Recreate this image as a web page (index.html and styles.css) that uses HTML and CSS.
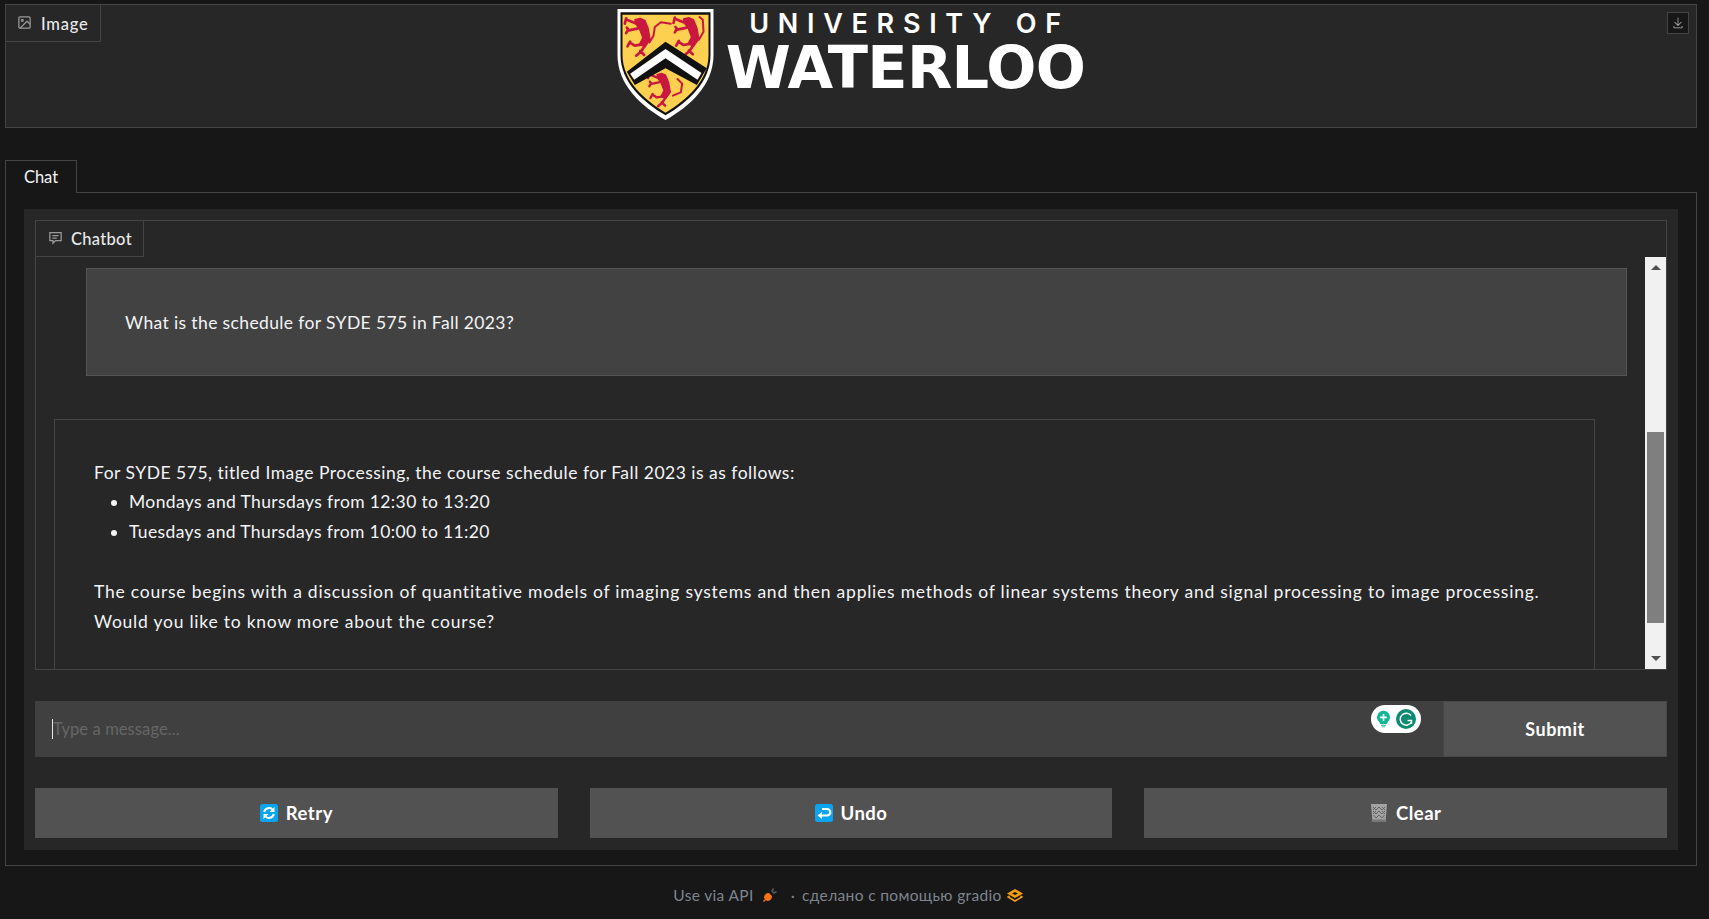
FILE: index.html
```html
<!DOCTYPE html>
<html lang="ru">
<head>
<meta charset="utf-8">
<title>University of Waterloo Chat</title>
<link rel="stylesheet" href="styles.css">
</head>
<body>
<svg class="defs" width="0" height="0">
  <defs>
    <g id="lion" fill="#c9173f" stroke="#c9173f" stroke-linecap="round" stroke-linejoin="round">
      <path stroke-width="4" d="M82 44 L98 40 L112 46 L122 70 L128 104 L112 126 L96 118 L106 98 L96 72 L86 58Z"/>
      <path fill="none" stroke-width="8" d="M88 56 L58 44 M56 40 L52 56 M92 70 L64 76 L58 68 M62 74 L56 84 M104 118 L82 122 L66 112 M68 110 L60 124 M112 122 L100 140 L86 152 M98 138 L110 150"/>
    </g>
  </defs>
</svg>
<div class="page">
  <section class="image-block">
    <div class="block-label label-image">
      <svg class="label-icon" viewBox="0 0 24 24" fill="none" stroke="currentColor" stroke-width="2"><rect x="3" y="3" width="18" height="18" rx="2"/><circle cx="8.500" cy="8.500" r="1.500"/><path d="M21 15l-5-5L5 21"/></svg>
      <span>Image</span>
    </div>
    <button class="download" aria-label="Download">
      <svg viewBox="0 0 32 32" fill="currentColor"><path d="M26 24v4H6v-4H4v4a2 2 0 0 0 2 2h20a2 2 0 0 0 2-2v-4zm0-10l-1.410-1.410L17 20.170V2h-2v18.170l-7.590-7.580L6 14l10 10l10-10z"/></svg>
    </button>
    <div class="logo">
      <svg class="shield" viewBox="24 12 288 333">
        <path fill="#fff" d="M24 12 H312 V150 C312 240 240 305 168 345 C96 305 24 240 24 150Z"/>
        <path fill="#111" d="M33 22 H303 V150 C303 232 234 292 168 331 C102 292 33 232 33 150Z"/>
        <path fill="#fdd04f" d="M39 29 H297 V150 C297 228 230 286 168 323 C106 286 39 228 39 150Z"/>
        <use href="#lion" x="-6" y="0"/>
        <use href="#lion" transform="translate(140 -2)"/>
        <use href="#lion" transform="translate(70 170) scale(.88)"/>
        <path fill="none" stroke="#c9173f" stroke-width="6" stroke-linecap="round" stroke-linejoin="round" d="M120 112 L132 92 L136 66 L154 52 L184 56M268 104 L282 80 L280 44 L270 36M190 272 L214 262 L218 236 L204 222"/>
        <path fill="#111" d="M168 110 L292 190 L262 240 L168 190 L76 240 L52 200Z"/>
        <path fill="#fff" d="M168 132 L276 204 L264 224 L168 160 L74 224 L62 206Z"/>
      </svg>
      <div class="wordmark">
        <span class="wm-top">UNIVERSITY OF</span>
        <span class="wm-main">WATERLOO</span>
      </div>
    </div>
  </section>

  <nav class="tabs"><span class="tab">Chat</span><span class="tab-rest"></span></nav>

  <main class="tab-panel">
    <div class="inner">
      <section class="chatbot">
        <div class="block-label label-chat">
          <svg class="label-icon" viewBox="0 0 24 24" fill="none" stroke="currentColor" stroke-width="2"><path d="M3 4h18v13h-9l-4 4v-4H3z"/><path d="M7 9h10M7 13h7"/></svg>
          <span>Chatbot</span>
        </div>
        <div class="chat-row">
          <div class="messages">
            <div class="msg user"><p>What is the schedule for SYDE 575 in Fall 2023?</p></div>
            <div class="msg bot">
              <p class="lead">For SYDE 575, titled Image Processing, the course schedule for Fall 2023 is as follows:</p>
              <ul>
                <li>Mondays and Thursdays from 12:30 to 13:20</li>
                <li>Tuesdays and Thursdays from 10:00 to 11:20</li>
              </ul>
              <p class="para">The course begins with a discussion of quantitative models of imaging systems and then applies methods of linear systems theory and signal processing to image processing. Would you like to know more about the course?</p>
            </div>
          </div>
          <div class="scrollbar">
            <span class="arrow up"></span>
            <div class="track"><span class="thumb"></span></div>
            <span class="arrow down"></span>
          </div>
        </div>
      </section>

      <div class="input-row">
        <div class="input">
          <span class="caret"></span><span class="placeholder">Type a message...</span>
          <div class="grammarly">
            <svg viewBox="0 0 18 20" width="15" height="18"><path fill="#11b795" d="M9 0a8 8 0 0 0-5 14c1 1 1 2 1 2h8s0-1 1-2A8 8 0 0 0 9 0z"/><path fill="#11b795" d="M6 17h6v1.200H6zM7 19h4v1H7z"/><path fill="#fff" d="M8 4h2v3h3v2h-3v3H8V9H5V7h3z"/></svg>
            <svg viewBox="0 0 20 20" width="20" height="20"><circle cx="10" cy="10" r="10" fill="#0a8a71"/><path fill="none" stroke="#fff" stroke-width="1.500" d="M15 6.500A6 6 0 1 0 15.500 13M11.500 11.500H15.500V15"/></svg>
          </div>
        </div>
        <button class="btn submit">Submit</button>
      </div>

      <div class="actions">
        <button class="btn action">
          <svg class="emoji" viewBox="0 0 18 18"><rect width="18" height="18" rx="2.500" fill="#0aa5ee"/><path fill="none" stroke="#fff" stroke-width="2" d="M4.200 8A5 5 0 0 1 13 6M13.800 10A5 5 0 0 1 5 12"/><path fill="#fff" d="M14.500 3v5h-5zM3.500 15v-5h5z"/></svg>
          Retry
        </button>
        <button class="btn action">
          <svg class="emoji" viewBox="0 0 18 18"><rect width="18" height="18" rx="2.500" fill="#0aa5ee"/><path fill="none" stroke="#fff" stroke-width="2.200" d="M7 5h5a3.200 3.200 0 0 1 0 6.500H5"/><path fill="#fff" d="M7 8v7L2.500 11.500z"/></svg>
          Undo
        </button>
        <button class="btn action">
          <svg class="emoji" viewBox="0 0 18 18"><path fill="#a3a3a3" d="M1 0h16l-1.500 18h-13z"/><path fill="none" stroke="#5c5c5c" stroke-width=".9" d="M3 3l3 3 3-3 3 3 3-3M3 7l3 3 3-3 3 3 3-3M3.500 11l2.500 3 3-3 3 3 2.500-3M6 3l-3 3M12 3l3 3M6 7l-3 3M12 7l3 3"/><path fill="#777" d="M2.500 15.500h13l-.3 2.500H2.800z"/></svg>
          Clear
        </button>
      </div>
    </div>
  </main>

  <footer class="footer">
    <span>Use via API</span>
    <svg class="foot-icon plug" viewBox="0 0 16 16"><path fill="#f97316" d="M2 11c0-3 2-5 5-5l3 3c0 3-2 5-5 5l-1-1-2 2-1-1 2-2z"/><path fill="#555c66" d="M9 4l2-3 1 1-1 2 1 1 2-1 1 1-3 2z"/></svg>
    <span class="dot">·</span>
    <span>сделано с помощью gradio</span>
    <svg class="foot-icon gradio" viewBox="0 0 16 13"><path fill="#f59e0b" d="M8 0l8 4.500-8 4.500-8-4.500zM8 3L5 4.500 8 6l3-1.500z" fill-rule="evenodd"/><path fill="none" stroke="#f59e0b" stroke-width="1.600" d="M2.500 7L1 8l7 4 7-4-1.500-1"/></svg>
  </footer>
</div>
</body>
</html>
```
FILE: styles.css
```css
* { box-sizing: border-box; }
html, body { margin: 0; height: 100%; }
body {
  background: #171717;
  color: #f3f4f6;
  font-family: "Lato", "Noto Sans", sans-serif;
  overflow: hidden;
}
.defs { position: absolute; }
.page { padding: 4px 12px 0 5px; }

.image-block {
  position: relative;
  height: 124px;
  background: #272727;
  border: 1px solid #444;
}
.block-label {
  position: absolute;
  left: 0;
  top: 0;
  display: flex;
  align-items: center;
  background: #272727;
  border-right: 1px solid #444;
  border-bottom: 1px solid #444;
  font-size: 16.500px;
  font-weight: 500;
  color: #e9e9e9;
  letter-spacing: .3px;
}
.label-image { width: 95px; height: 37px; padding-left: 11px; gap: 9px; letter-spacing: .8px; }
.label-chat { width: 108px; height: 36px; padding-left: 12px; gap: 8px; }
.label-icon { width: 15px; height: 15px; color: #9a9a9a; flex: none; margin-top: -2px; }
.block-label span { padding-top: 1px; }

.download {
  position: absolute;
  top: 7px;
  right: 7px;
  width: 22px;
  height: 22px;
  padding: 4px;
  background: #171717;
  border: 1px solid #444;
  color: #b5b5b5;
}
.download svg { display: block; width: 12px; height: 12px; }

.logo {
  display: flex;
  justify-content: center;
  align-items: flex-start;
  gap: 12px;
  padding-top: 4px;
}
.shield { width: 97px; height: 111px; flex: none; }
.wordmark { display: flex; flex-direction: column; align-items: center; color: #fff; }
.wm-top { font-family: "Inter", sans-serif; font-size: 27px; font-weight: 600; letter-spacing: 8.700px; line-height: 27px; margin-top: 1px; padding-left: 8px; }
.wm-main { font-family: "DejaVu Sans", sans-serif; font-size: 59px; font-weight: 700; line-height: 59px; letter-spacing: -.75px; margin-top: 1px; }

.tabs { display: flex; margin-top: 32px; height: 33px; }
.tab {
  width: 72px;
  border: 1px solid #444;
  border-bottom: 0;
  text-align: center;
  line-height: 33px;
  font-size: 16.500px;
  color: #f3f4f6;
}
.tab-rest { flex: 1; border-bottom: 1px solid #444; }

.tab-panel {
  height: 673px;
  padding: 16px 18px 15px 18px;
  border: 1px solid #444;
  border-top: 0;
}
.inner {
  height: 641px;
  padding: 11px;
  background: #272727;
}
.chatbot {
  position: relative;
  height: 450px;
  border: 1px solid #444;
  padding-top: 36px;
  overflow: hidden;
}
.chat-row { display: flex; height: 100%; }
.messages { flex: 1; min-width: 0; overflow: hidden; padding-top: 11px; }
.msg { font-size: 17.500px; line-height: 30px; letter-spacing: .37px; color: #f3f4f6; width: 1541px; }
.msg p { margin: 0; }
.user { margin-left: 50px; height: 108px; background: #424242; border: 1px solid #555; padding: 39px 38px 38px; }
.bot { margin: 43px 0 0 18px; height: 300px; border: 1px solid #444; padding: 38px 38px 38px 39px; }
.bot .lead { letter-spacing: .5px; }
.bot ul { margin: -1px 0 0; padding: 0 0 0 35px; }
.bot .para { margin-top: 30px; letter-spacing: .77px; }

.scrollbar {
  flex: none;
  width: 21px;
  background: #f1f1f1;
  display: flex;
  flex-direction: column;
  align-items: center;
}
.arrow { flex: none; width: 21px; height: 21px; display: flex; align-items: center; justify-content: center; }
.arrow::before { content: ""; border-left: 5px solid transparent; border-right: 5px solid transparent; }
.up::before { border-bottom: 5px solid #505050; }
.down::before { border-top: 5px solid #505050; }
.track { flex: 1; width: 100%; padding: 154px 2px 0; }
.thumb { display: block; height: 191px; background: #7f7f7f; }

.input-row { display: flex; height: 56px; margin-top: 31px; }
.input {
  position: relative;
  flex: 1;
  display: flex;
  align-items: center;
  background: #404040;
  padding-left: 17px;
  font-size: 16.500px;
}
.caret { width: 1px; height: 20px; background: #e6e6e6; }
.placeholder { color: #666; letter-spacing: .1px; }
.grammarly {
  position: absolute;
  top: 4px;
  right: 22px;
  width: 50px;
  height: 28px;
  border-radius: 14px;
  background: #fff;
  display: flex;
  align-items: center;
  justify-content: center;
  gap: 5px;
}
.btn {
  border: 0;
  background: #525252;
  color: #fff;
  font-family: inherit;
  font-size: 18.500px;
  font-weight: 700;
  letter-spacing: .5px;
}
.submit { flex: none; width: 224px; border: 1px solid #474747; font-size: 18px; }
.actions { display: flex; gap: 32px; margin-top: 31px; }
.action {
  flex: 1;
  height: 50px;
  display: flex;
  align-items: center;
  justify-content: center;
  gap: 8px;
}
.emoji { width: 18px; height: 18px; flex: none; }

.footer {
  display: flex;
  align-items: center;
  justify-content: center;
  height: 58px;
  padding-right: 6px;
  color: #7f858e;
  font-size: 15.500px;
  letter-spacing: .35px;
}
.foot-icon { width: 16px; height: 13px; margin-left: 5px; }
.plug { height: 16px; margin-left: 8px; }
.dot { margin: 0 7px 0 13px; }
```
